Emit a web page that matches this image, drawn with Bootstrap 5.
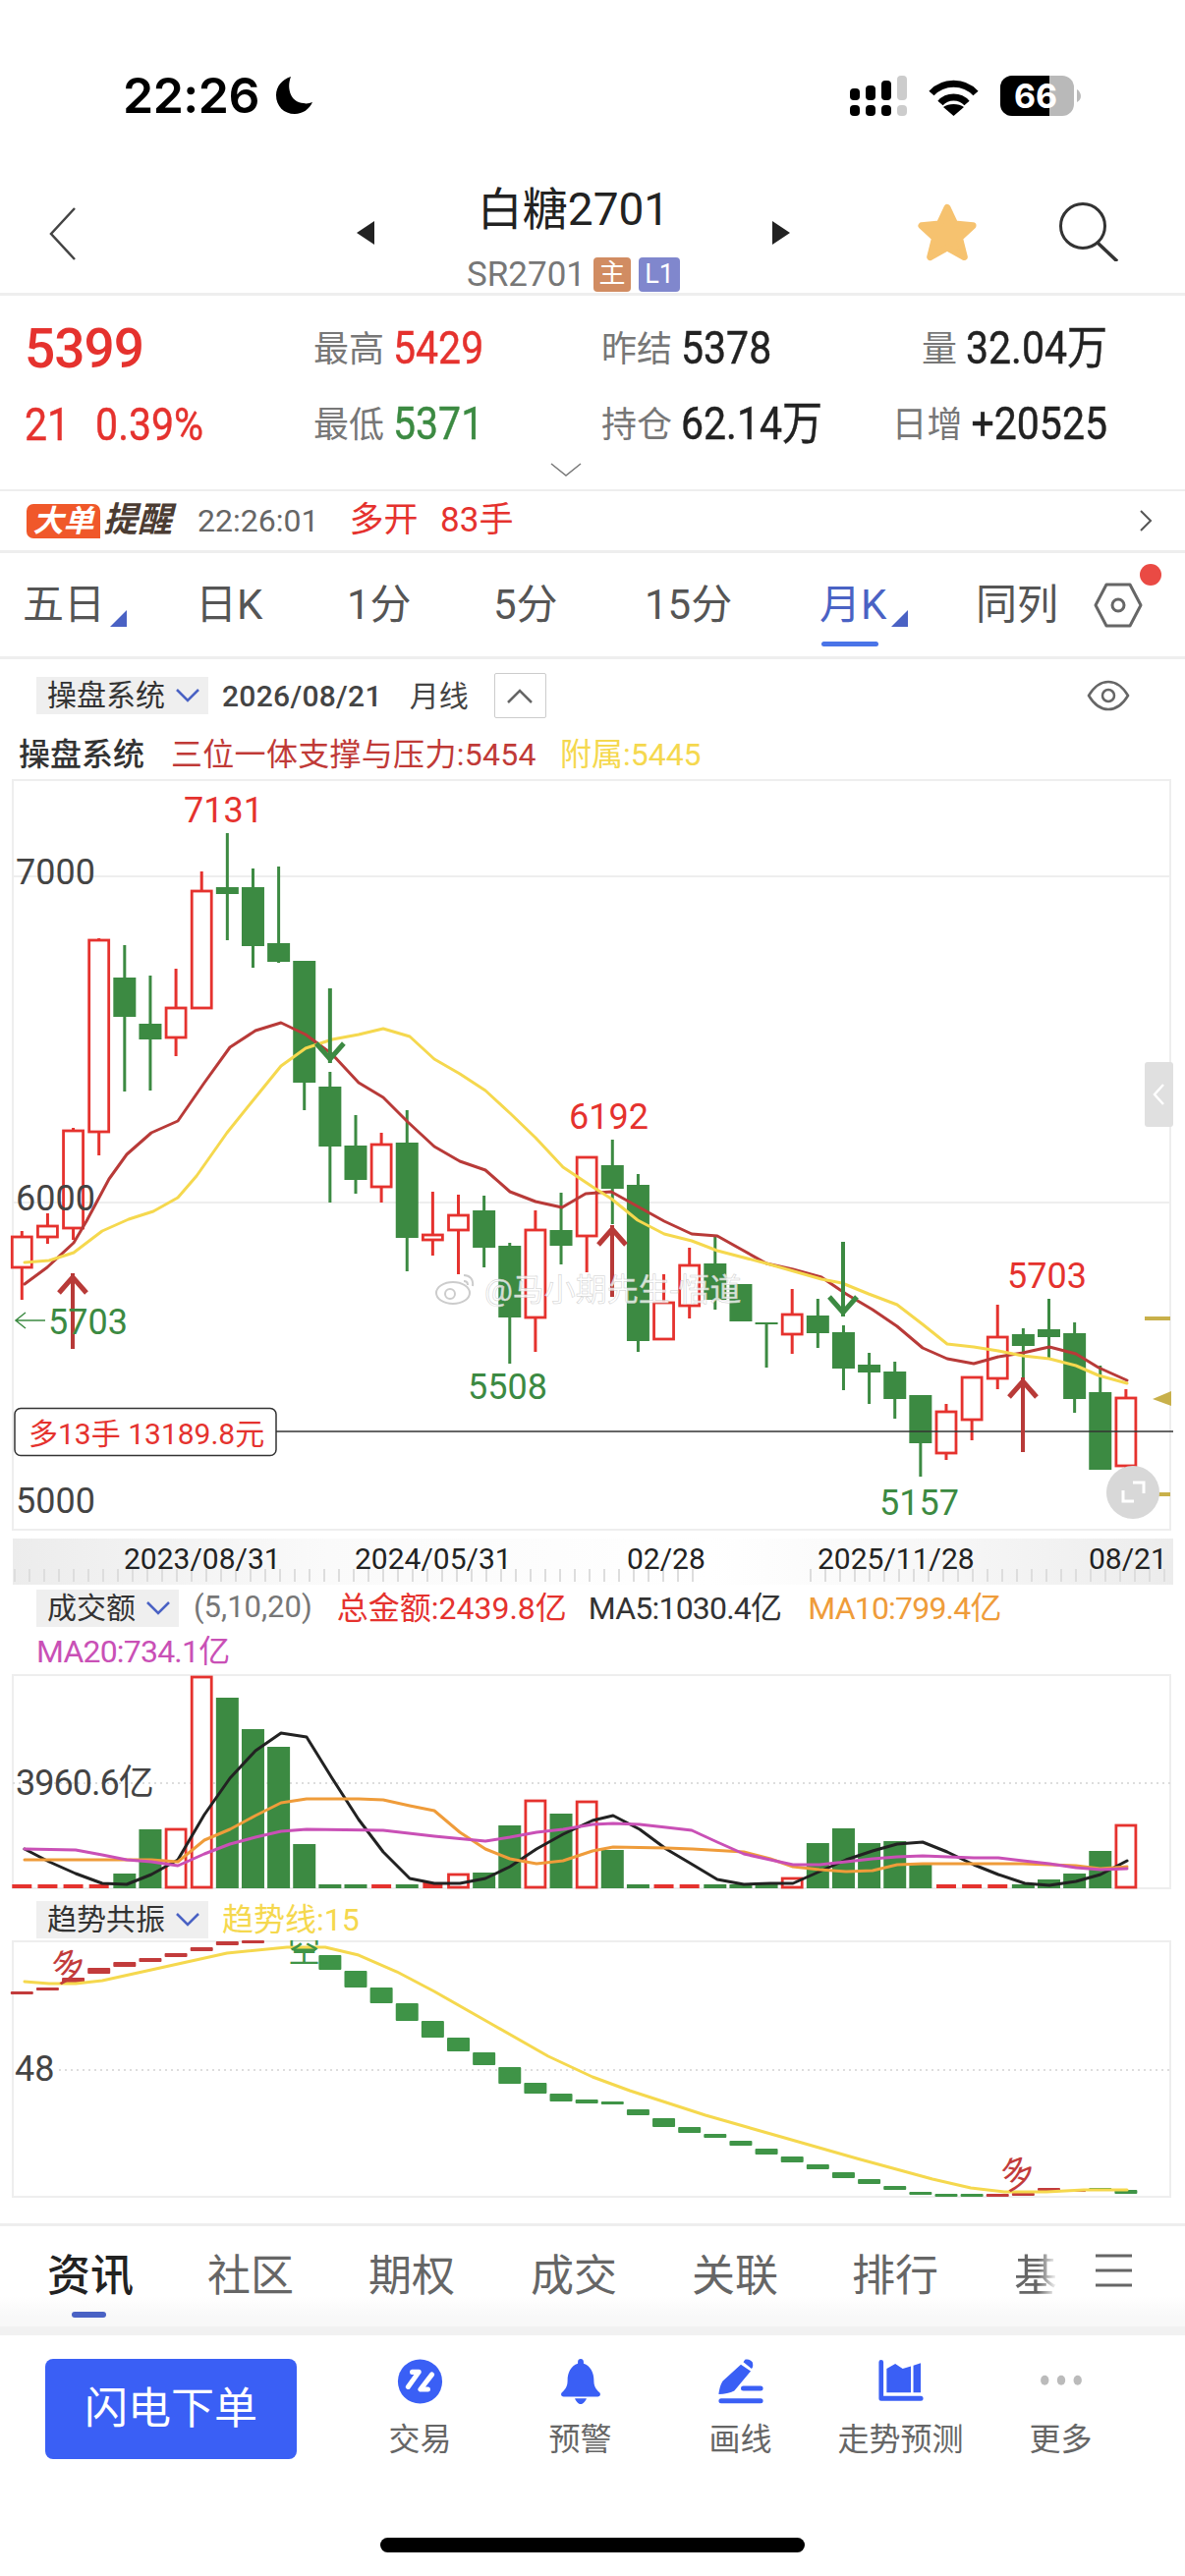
<!DOCTYPE html>
<html lang="zh-CN">
<head>
<meta charset="UTF-8">
<meta name="viewport" content="width=device-width, initial-scale=1.0">
<title>白糖2701</title>
<link href="https://cdn.jsdelivr.net/npm/bootstrap@5.3.2/dist/css/bootstrap.min.css" rel="stylesheet">
<script src="https://cdn.jsdelivr.net/npm/bootstrap@5.3.2/dist/js/bootstrap.bundle.min.js" defer></script>
<style>
  body { width: 1206px; height: 2622px; overflow: hidden; background: #fff; color: #222;
         font-family: Roboto, "Noto Sans CJK SC", sans-serif; }
  svg { display: block; }
  svg text { font-family: Roboto, "Noto Sans CJK SC", sans-serif; }
  .up { color: #e5322e; }
  .down { color: #3c8a42; }

  .status-row { height: 180px; padding: 70px 106px 0 125px; }
  .status-time { font: 600 50px/54px Inter, sans-serif; color: #000; letter-spacing: -.5px; }
  .status-icons { gap: 22px; padding-top: 7px; }

  .nav-row { height: 121px; padding-left: 50px; border-bottom: 3px solid #eee; }
  .nav-back { width: 313px; padding-top: 30px; }
  .nav-mid { width: 405px; }
  .tri-mark { margin-top: 45px; }
  .nav-title { font-size: 46px; line-height: 50px; margin-top: 8px; color: #222; }
  .nav-sub { font-size: 35px; line-height: 36px; color: #777; margin-top: 24px; height: 36px; }
  .tag-zhu, .tag-l1 { display: inline-block; color: #fff; font-size: 27px; line-height: 35px; height: 35px; border-radius: 4px; text-align: center; }
  .tag-zhu { width: 38px; background: #d18c62; margin-left: 8px; }
  .tag-l1 { width: 42px; background: #8087cd; margin-left: 8px; }
  .nav-star { margin: 26px 0 0 129px; }
  .nav-find { margin: 26px 0 0 83px; }

  .quote-box { height: 199px; padding: 30px 79px 0 25px; border-bottom: 2px solid #eee; }
  .quote-grid { display: grid; grid-template-columns: 294px 293px 280px 1fr; grid-auto-rows: 48px; row-gap: 29px; align-items: center; font-size: 41px; line-height: 48px; white-space: nowrap; }
  .quote-grid .lb { font-size: 36px; color: #777; margin-right: 9px; }
  .quote-last { font-size: 55px; font-weight: 500; letter-spacing: -1px; }
  .quote-val { display: inline-block; transform: scaleY(1.14); -webkit-text-stroke: .4px currentColor; }
  .quote-gap { margin-left: 26px; }

  .alert-row { height: 63px; padding: 0 33px 0 27px; border-bottom: 3px solid #eee; }
  .big-tag { width: 75px; height: 35px; background: #f0582a; color: #fff; font-size: 31px; line-height: 35px; font-weight: 700; font-style: italic; border-radius: 7px 7px 0 7px; text-align: center; }
  .tip-word { font-size: 35px; font-weight: 700; font-style: italic; color: #4b3c33; margin-left: 3px; }
  .alert-time { font-size: 32px; color: #666; margin-left: 26px; }
  .alert-msg { font-size: 35px; color: #e5322e; margin-left: 31px; word-spacing: 14px; }

  .period-row { height: 108px; display: grid; grid-template-columns: 176px 154px 149px 154px 178px 159px 120px 1fr; padding-left: 23px; align-items: center; border-bottom: 3px solid #eee; font-size: 42px; color: #555; }
  .period-item { position: relative; width: fit-content; line-height: 50px; }
  .period-on { color: #4a62c4; }
  .period-on::before { content: ""; position: absolute; left: 2px; right: 8px; bottom: -17px; height: 5px; border-radius: 3px; background: #4a74e8; }
  .has-corner::after { content: ""; position: absolute; right: -22px; bottom: 3px; border-style: solid; border-width: 0 0 17px 17px; border-color: transparent transparent #4a62c4 transparent; }
  .set-dot { position: absolute; left: 47px; top: -19px; width: 22px; height: 22px; border-radius: 50%; background: #ea4a44; }

  .tool-row { height: 74px; padding: 0 56px 0 37px; font-size: 30px; color: #444; }
  .pick-box { height: 38px; background: #efefef; padding: 0 9px 0 11px; gap: 11px; font-size: 30px; line-height: 38px; color: #333; }
  .date-txt { margin-left: 14px; font-weight: 500; letter-spacing: .3px; }
  .fold-btn { width: 53px; height: 46px; border: 1.5px solid #ccc; border-radius: 2px; margin-left: 26px; }

  .legend-row { height: 48px; padding-left: 19px; font-size: 32px; line-height: 46px; white-space: nowrap; }
  .legend-head { font-weight: 500; color: #333; margin-right: 27px; }
  .c-ma { color: #c03a37; letter-spacing: .3px; }
  .c-yellow { color: #f5d84e; margin-left: 24px; }

  .vol-head { height: 47px; padding-left: 37px; font-size: 30px; white-space: nowrap; }
  .vol-params { color: #777; margin-left: 15px; font-size: 31px; }
  .vol-total { margin-left: 25px; font-size: 32px; }
  .vol-ma5 { margin-left: 22px; font-size: 32px; color: #333; letter-spacing: -.8px; }
  .vol-ma10 { margin-left: 27px; font-size: 32px; color: #ef9c3a; letter-spacing: -.8px; }
  .vol-ma20 { height: 43px; padding-left: 37px; font-size: 32px; line-height: 42px; color: #c950b6; letter-spacing: -.8px; }
  .trend-head { height: 50px; padding: 8px 0 0 37px; }
  .trend-name { margin-left: 14px; font-size: 32px; color: #f5d84e; }

  .info-row { margin-top: 25px; border-top: 3px solid #eee; height: 114px; display: grid; grid-template-columns: 163px 164px 165px 164px 163px 165px 83px 1fr; padding-left: 48px;
              background: linear-gradient(#fff 70%, #f8f8f8 90%); border-bottom: 9px solid #f1f1f1; align-items: start; font-size: 44px; color: #666; }
  .info-item { position: relative; line-height: 60px; margin-top: 21px; width: fit-content; }
  .info-on { color: #222; font-weight: 500; }
  .info-on::after { content: ""; position: absolute; left: 25px; width: 35px; bottom: -12px; height: 6px; border-radius: 3px; background: #4a62c4; }
  .info-fade { -webkit-mask-image: linear-gradient(90deg, #000 55%, transparent 100%); mask-image: linear-gradient(90deg, #000 55%, transparent 100%); }

  .act-row { height: 245px; padding: 24px 0 0 46px; position: relative; }
  .fast-btn { width: 256px; height: 102px; background: #3a5ff5; border: 0; border-radius: 8px; color: #fff; font-size: 44px; }
  .act-item { width: 163px; height: 102px; font-size: 32px; line-height: 40px; color: #666; }
  .act-item svg { height: 55px; margin-bottom: 16px; }
  .home-bar { position: absolute; left: 387px; bottom: 24px; width: 432px; height: 15px; background: #000; border-radius: 8px; }
</style>
</head>
<body>

  <!-- status bar -->
  <div class="status-row d-flex justify-content-between">
    <div class="d-flex align-items-start">
      <span class="status-time">22:26</span>
      <svg class="ms-3" width="40" height="40" viewBox="0 0 40 40" style="margin-top:7px"><path d="M16 1C7 4 1 11 1 20c0 11 8 19 19 19 8 0 15-5 18-12-3 1-6 2-9 1C17 28 11 14 16 1z" fill="#000"/></svg>
    </div>
    <div class="status-icons d-flex align-items-start">
      <svg width="58" height="41" viewBox="0 0 58 41">
        <g fill="#000"><rect x="0" y="13" width="10" height="12" rx="4"/><rect x="16" y="10" width="10" height="15" rx="4"/><rect x="32" y="5" width="10" height="20" rx="4"/>
        <rect x="0" y="30" width="10" height="11" rx="4"/><rect x="16" y="30" width="10" height="11" rx="4"/><rect x="32" y="30" width="10" height="11" rx="4"/></g>
        <rect x="48" y="0" width="10" height="25" rx="4" fill="#ccc"/><rect x="48" y="30" width="10" height="11" rx="4" fill="#ccc"/>
      </svg>
      <svg class="mt-1" width="51" height="37" viewBox="0 0 51 37"><path d="M3 14C15 1 36 1 48 14M12 24C19 16 32 16 39 24" fill="none" stroke="#000" stroke-width="7"/><path d="M25.500 37L15 28c5-4 16-4 21 0z" fill="#000"/></svg>
      <svg width="82" height="41" viewBox="0 0 82 41">
        <rect width="75" height="41" rx="12" fill="#b9b9b9"/><path d="M12 0h38v41H12A12 12 0 0 1 0 29V12A12 12 0 0 1 12 0z" fill="#000"/>
        <path d="M78 14c2 1 4 4 4 7s-2 5-4 6z" fill="#bbb"/>
        <text x="36" y="33" text-anchor="middle" font-size="34" font-weight="700" fill="#fff" style="font-family:Inter,sans-serif">66</text>
      </svg>
    </div>
  </div>

  <!-- title -->
  <div class="nav-row d-flex">
    <div class="nav-back">
      <svg width="28" height="56" viewBox="0 0 28 56"><path d="M26 2L2 28l24 26" fill="none" stroke="#444" stroke-width="2.500"/></svg>
    </div>
    <svg class="tri-mark" width="18" height="24" viewBox="0 0 18 24"><path d="M18 0v24L0 12z" fill="#222"/></svg>
    <div class="nav-mid text-center">
      <div class="nav-title">白糖2701</div>
      <div class="nav-sub d-flex justify-content-center">SR2701<span class="tag-zhu">主</span><span class="tag-l1">L1</span></div>
    </div>
    <svg class="tri-mark" width="18" height="24" viewBox="0 0 18 24"><path d="M0 0v24l18-12z" fill="#222"/></svg>
    <svg class="nav-star" width="62" height="61" viewBox="0 0 64 62"><path d="M32 5l8 17 19 2-14 13 5 20-18-10-18 10 5-20L5 24l19-2z" fill="#f6c26f" stroke="#f6c26f" stroke-width="7" stroke-linejoin="round"/></svg>
    <svg class="nav-find" width="60" height="60" viewBox="0 0 60 60"><circle cx="24" cy="24" r="22.500" fill="none" stroke="#333" stroke-width="3"/><path d="M39 41l20 19" stroke="#333" stroke-width="3.500"/></svg>
  </div>

  <!-- quote -->
  <div class="quote-box">
    <div class="quote-grid">
      <div class="up quote-last">5399</div>
      <div><span class="lb">最高</span><span class="up quote-val">5429</span></div>
      <div><span class="lb">昨结</span><span class="quote-val">5378</span></div>
      <div class="text-end"><span class="lb">量</span><span class="quote-val">32.04万</span></div>
      <div class="up"><span class="quote-val">21</span><span class="quote-val quote-gap">0.39%</span></div>
      <div><span class="lb">最低</span><span class="down quote-val">5371</span></div>
      <div><span class="lb">持仓</span><span class="quote-val">62.14万</span></div>
      <div class="text-end"><span class="lb">日增</span><span class="quote-val">+20525</span></div>
    </div>
    <svg class="mx-auto" style="margin-top:15px" width="32" height="14" viewBox="0 0 32 14"><path d="M1 1l15 12L31 1" fill="none" stroke="#777" stroke-width="1.500"/></svg>
  </div>

  <div class="alert-row d-flex align-items-center">
    <div class="big-tag">大单</div>
    <div class="tip-word">提醒</div>
    <div class="alert-time">22:26:01</div>
    <div class="alert-msg">多开 83手</div>
    <svg class="ms-auto" width="13" height="22" viewBox="0 0 13 22"><path d="M1 1l10 10L1 21" fill="none" stroke="#555" stroke-width="2"/></svg>
  </div>

  <div class="period-row">
    <div class="period-item has-corner">五日</div>
    <div class="period-item">日K</div>
    <div class="period-item">1分</div>
    <div class="period-item">5分</div>
    <div class="period-item">15分</div>
    <div class="period-item period-on has-corner">月K</div>
    <div class="period-item">同列</div>
    <div class="period-item">
      <svg width="50" height="46" viewBox="0 0 50 46"><path d="M13 2h24l11 21-11 21H13L2 23z" fill="none" stroke="#666" stroke-width="3" stroke-linejoin="round"/><circle cx="25" cy="23" r="6" fill="none" stroke="#666" stroke-width="3"/></svg>
      <span class="set-dot"></span>
    </div>
  </div>

  <!-- main chart -->
  <div class="tool-row d-flex align-items-center">
    <div class="pick-box d-flex align-items-center">操盘系统
      <svg width="24" height="14" viewBox="0 0 24 14"><path d="M1 1l11 11L23 1" fill="none" stroke="#4a62c4" stroke-width="2.500"/></svg>
    </div>
    <span class="date-txt">2026/08/21</span>
    <span class="ms-4 ps-1">月线</span>
    <div class="fold-btn d-flex align-items-center justify-content-center">
      <svg width="26" height="15" viewBox="0 0 26 15"><path d="M1 14L13 2l12 12" fill="none" stroke="#666" stroke-width="2.500"/></svg>
    </div>
    <svg class="ms-auto" width="44" height="32" viewBox="0 0 44 32"><path d="M2 16C8 6 15 2 22 2s14 4 20 14c-6 10-13 14-20 14S8 26 2 16z" fill="none" stroke="#666" stroke-width="2.500"/><circle cx="22" cy="16" r="6" fill="none" stroke="#666" stroke-width="2.500"/></svg>
  </div>
  <div class="legend-row">
    <span class="legend-head">操盘系统</span><span class="c-ma">三位一体支撑与压力:5454</span><span class="c-yellow">附属:5445</span>
  </div>
  <svg id="mainChart" width="1206" height="768" viewBox="0 793 1206 768"></svg>
  <svg id="axisBand" width="1206" height="52" viewBox="0 1561 1206 52"></svg>

  <!-- volume -->
  <div class="vol-head d-flex align-items-center">
    <div class="pick-box d-flex align-items-center">成交额
      <svg width="24" height="14" viewBox="0 0 24 14"><path d="M1 1l11 11L23 1" fill="none" stroke="#4a62c4" stroke-width="2.500"/></svg>
    </div>
    <span class="vol-params">(5,10,20)</span>
    <span class="vol-total up">总金额:2439.8亿</span>
    <span class="vol-ma5">MA5:1030.4亿</span>
    <span class="vol-ma10">MA10:799.4亿</span>
  </div>
  <div class="vol-ma20">MA20:734.1亿</div>
  <svg id="volChart" width="1206" height="222" viewBox="0 1703 1206 222"></svg>

  <!-- trend -->
  <div class="trend-head d-flex align-items-center">
    <div class="pick-box d-flex align-items-center">趋势共振
      <svg width="24" height="14" viewBox="0 0 24 14"><path d="M1 1l11 11L23 1" fill="none" stroke="#4a62c4" stroke-width="2.500"/></svg>
    </div>
    <span class="trend-name">趋势线:15</span>
  </div>
  <svg id="trendChart" width="1206" height="263" viewBox="0 1975 1206 263"></svg>

  <!-- bottom -->
  <div class="info-row">
    <div class="info-item info-on">资讯</div>
    <div class="info-item">社区</div>
    <div class="info-item">期权</div>
    <div class="info-item">成交</div>
    <div class="info-item">关联</div>
    <div class="info-item">排行</div>
    <div class="info-item info-fade">基</div>
    <svg class="mt-4 pt-1" width="37" height="40" viewBox="0 0 37 36"><path d="M0 2h37M0 17h37M0 32h37" stroke="#666" stroke-width="3"/></svg>
  </div>
  <div class="act-row d-flex align-items-start">
    <button class="fast-btn" type="button">闪电下单</button>
    <div class="d-flex" style="margin-left:44px">
      <div class="act-item d-flex flex-column align-items-center">
        <svg width="55" height="55" viewBox="0 0 55 55"><circle cx="27.500" cy="27.500" r="27" fill="#3a5ff5"/><path d="M18 16H26L13 34M42 19L28 37H37" fill="none" stroke="#fff" stroke-width="6" stroke-linecap="round" stroke-linejoin="round"/></svg>交易
      </div>
      <div class="act-item d-flex flex-column align-items-center">
        <svg width="50" height="55" viewBox="0 0 50 55"><path d="M25 0c2 0 3.500 1.600 3.500 3.500v2.200C37 8.500 41 17 41 26c0 7 2 10.500 7 15 1.600 2 .8 5-2.200 5H4.200C1.200 46 .4 43 2 41c5-4.500 7-8 7-15 0-9 4-17.500 12.500-20.300V3.500C21.500 1.600 23 0 25 0z M18 48h14c0 2-4 7-7 7s-7-5-7-7z" fill="#3a5ff5"/></svg>预警
      </div>
      <div class="act-item d-flex flex-column align-items-center">
        <svg width="54" height="55" viewBox="0 0 54 55"><path d="M27 7l12 8-20 24c-5 3-12 4-19 4 1-7 2-11 5-16zM30 4l2-3c3-1 7 0 9 3 1 3 1 6-1 8z" fill="#3a5ff5"/><rect x="27" y="33" width="27" height="6" rx="3" fill="#3a5ff5"/><rect x="0" y="48" width="54" height="6" rx="3" fill="#3a5ff5"/></svg>画线
      </div>
      <div class="act-item d-flex flex-column align-items-center">
        <svg width="54" height="55" viewBox="0 0 54 55"><path d="M0 4a2.800 2.800 0 0 1 5.600 0v41H51a3 3 0 0 1 0 6H3a3 3 0 0 1-3-3z" fill="#3a5ff5"/><path d="M9.500 12L20 6l9 6 10-3v32H9.500zM42 8l9-3v36h-9z" fill="#3a5ff5"/></svg>走势预测
      </div>
      <div class="act-item d-flex flex-column align-items-center">
        <svg width="54" height="55" viewBox="0 0 54 55"><ellipse cx="7" cy="26" rx="5" ry="6" fill="#bbb"/><ellipse cx="27" cy="26" rx="5" ry="6" fill="#bbb"/><ellipse cx="47" cy="26" rx="5" ry="6" fill="#bbb"/></svg>更多
      </div>
    </div>
    <div class="home-bar"></div>
  </div>

  <script>
    const RED = '#e5322e', GREEN = '#3c8a42', MA_RED = '#b83a38', YEL = '#f5d84e';
    const cx = i => 22.3 + 26.13 * i;

    // [type, wick top, body top, body bottom, wick bottom]
    const candles = [
      ['r',1253,1259,1290,1323],['r',1235,1248,1259,1266],['r',1148,1151,1250,1262],['r',955,957,1152,1176],
      ['g',962,995,1035,1111],['g',993,1042,1058,1110],['r',986,1026,1056,1075],['r',887,907,1026,1026],
      ['g',848,903,910,957],['g',884,903,963,985],['g',882,960,979,980],['g',978,978,1102,1130],
      ['g',1091,1106,1167,1224],['g',1135,1166,1201,1215],['r',1153,1165,1208,1224],['g',1130,1163,1260,1294],
      ['r',1213,1257,1262,1278],['r',1216,1237,1252,1297],['g',1217,1232,1270,1290],['g',1265,1268,1341,1388],
      ['r',1232,1252,1341,1376],['g',1214,1252,1268,1287],['r',1177,1178,1258,1295],['g',1160,1186,1210,1246],
      ['g',1195,1206,1365,1376],['r',1297,1326,1363,1363],['r',1270,1288,1329,1342],['g',1258,1286,1323,1333],
      ['g',1307,1307,1345,1345],['g',1346,1346,1348,1392],['r',1312,1338,1358,1378],['g',1322,1339,1357,1372],
      ['g',1349,1356,1393,1415],['g',1377,1389,1397,1429],['g',1386,1396,1424,1444],['g',1420,1420,1469,1503],
      ['r',1429,1437,1479,1486],['r',1402,1402,1445,1466],['r',1328,1361,1403,1414],['g',1352,1358,1370,1402],
      ['g',1322,1353,1361,1383],['g',1346,1357,1424,1438],['g',1390,1417,1496,1496],['r',1414,1423,1492,1495]
    ];

    const maRed = [[25,1307],[48,1290],[75,1265],[88,1243],[111,1200],[129,1175],[154,1153],[181,1141],[208,1102],[234,1066],[260,1049],[286,1041],[311,1053],[338,1073],[365,1102],[390,1117],[415,1142],[442,1167],[468,1182],[494,1191],[519,1213],[545,1223],[572,1229],[596,1215],[622,1213],[649,1228],[676,1243],[704,1256],[730,1258],[755,1272],[780,1286],[807,1292],[836,1300],[861,1317],[888,1333],[913,1350],[939,1372],[964,1383],[991,1388],[1016,1381],[1041,1377],[1068,1371],[1095,1378],[1118,1392],[1147,1405]];
    const maYel = [[25,1285],[50,1283],[75,1275],[104,1253],[131,1241],[156,1233],[181,1219],[200,1197],[231,1153],[260,1117],[286,1085],[311,1067],[338,1058],[365,1053],[390,1047],[417,1055],[442,1078],[468,1093],[494,1110],[519,1133],[545,1158],[573,1188],[603,1208],[622,1220],[649,1242],[676,1256],[704,1263],[730,1273],[780,1286],[836,1302],[857,1306],[884,1317],[913,1328],[939,1348],[964,1368],[991,1371],[1016,1375],[1041,1380],[1068,1383],[1095,1390],[1118,1400],[1147,1408]];

    const poly = (pts, color, w) => `<polyline points="${pts.map(p => p.join(',')).join(' ')}" fill="none" stroke="${color}" stroke-width="${w}" stroke-linejoin="round" stroke-linecap="round"/>`;
    const txt = (x, y, s, fill, size, extra = '') => `<text x="${x}" y="${y}" fill="${fill}" font-size="${size}" ${extra}>${s}</text>`;

    function arrow(x, from, to, color) {
      // shaft plus open head, tip at "to"
      const dir = to < from ? 1 : -1, back = to + dir * 20;
      return `<path d="M${x} ${from}L${x} ${to}" stroke="${color}" stroke-width="4"/>` +
             `<path d="M${x - 14} ${back}L${x} ${to + dir * 4}L${x + 14} ${back}" fill="none" stroke="${color}" stroke-width="5"/>`;
    }

    function drawMain() {
      let s = `<rect x="13" y="794" width="1178" height="763" fill="none" stroke="#eee" stroke-width="2"/>`;
      s += `<path d="M13 892H1191M13 1224H1191" stroke="#eee" stroke-width="2"/>`;
      candles.forEach((c, i) => {
        const x = cx(i), [t, wt, bt, bb, wb] = c;
        if (t === 'g') {
          s += `<rect x="${x - 1.500}" y="${wt}" width="3" height="${wb - wt}" fill="${GREEN}"/>`;
          s += `<rect x="${x - 11.500}" y="${bt}" width="23" height="${bb - bt}" fill="${GREEN}"/>`;
        } else {
          s += `<rect x="${x - 1.500}" y="${wt}" width="3" height="${wb - wt}" fill="${RED}"/>`;
          s += `<rect x="${x - 10}" y="${bt}" width="20" height="${bb - bt}" fill="#fff" stroke="${RED}" stroke-width="2.800"/>`;
        }
      });
      s += `<path d="M281 1457H1194" stroke="#333" stroke-width="1.500"/>`;
      s += poly(maRed, MA_RED, 3) + poly(maYel, YEL, 3);
      s += arrow(74, 1373, 1296, MA_RED) + arrow(623, 1320, 1247, MA_RED) + arrow(1041, 1478, 1402, MA_RED);
      s += arrow(cx(12), 1006, 1082, GREEN) + arrow(858, 1264, 1340, GREEN);
      // price labels
      s += txt(187, 837, '7131', RED, 36) + txt(16, 900, '7000', '#444', 36) + txt(16, 1232, '6000', '#444', 36) + txt(16, 1540, '5000', '#444', 36);
      s += txt(579, 1149, '6192', RED, 36) + txt(476, 1424, '5508', GREEN, 36) + txt(895, 1542, '5157', GREEN, 36) + txt(1025, 1311, '5703', RED, 36);
      s += `<path d="M46 1344H16M26 1336l-10 8 10 8" fill="none" stroke="${GREEN}" stroke-width="1.500"/>` + txt(49, 1358, '5703', GREEN, 36);
      // position tag
      s += `<rect x="15" y="1433.500" width="266" height="48" rx="6" fill="#fff" stroke="#333" stroke-width="1.500"/>`;
      s += txt(29, 1470, '多13手 13189.8元', RED, 30);
      // gold markers
      s += `<path d="M1165 1342H1191M1165 1521H1191" stroke="#c8b04a" stroke-width="4"/><path d="M1173 1424l19-8v15z" fill="#c8b04a"/>`;
      // side handle and expand button
      s += `<rect x="1165" y="1081" width="29" height="66" rx="3" fill="#e0e0e0"/><path d="M1184 1104l-9 10 9 10" fill="none" stroke="#fff" stroke-width="2.500"/>`;
      s += `<circle cx="1153" cy="1519" r="27" fill="#d8d8d8"/><path d="M1143 1517v11h11M1153 1509h11v11" fill="none" stroke="#fff" stroke-width="3"/>`;
      // watermark
      s += `<g fill="none" stroke="#ccc" stroke-width="2"><ellipse cx="461" cy="1316" rx="17" ry="11"/><circle cx="458" cy="1317" r="5"/><path d="M472 1298c6 0 10 4 9 11M472 1304c3 0 4 2 4 4"/></g>`;
      s += txt(493, 1324, '@马小期先生-悟道', 'rgba(255,255,255,.8)', 32, 'stroke="#ccc" stroke-width=".5"');
      document.getElementById('mainChart').innerHTML = s;
    }

    function drawAxis() {
      let s = `<defs><linearGradient id="bandFade"><stop offset="0" stop-color="#ececec"/><stop offset=".27" stop-color="#fafafa"/><stop offset=".6" stop-color="#fff"/><stop offset=".8" stop-color="#f7f7f7"/><stop offset="1" stop-color="#ececec"/></linearGradient></defs>`;
      s += `<rect x="13" y="1566" width="1181" height="47" fill="url(#bandFade)"/>`;
      for (let x = 15; x < 1190; x += 15) {
        if (x > 718 && x < 824) continue;
        s += `<path d="M${x} 1597V1610" stroke="#ddd" stroke-width="2"/>`;
      }
      [[126,'2023/08/31'],[361,'2024/05/31'],[638,'02/28'],[832,'2025/11/28'],[1108,'08/21']].forEach(a => {
        s += txt(a[0], 1597, a[1], '#222', 30);
      });
      document.getElementById('axisBand').innerHTML = s;
    }

    function drawVolume() {
      const tops = [1918,1918,1918,1918,1907,1862,1862,1707,1728,1760,1778,1877,1918,1918,1918,1918,1916,1908,1906,1858,1833,1846,1834,1883,1918,1918,1918,1918,1918,1918,1912,1876,1861,1876,1874,1898,1918,1918,1918,1918,1913,1907,1884,1858];
      let s = `<rect x="13" y="1705" width="1178" height="217" fill="none" stroke="#eee" stroke-width="2"/>`;
      s += `<path d="M13 1815H1191" stroke="#ddd" stroke-width="2" stroke-dasharray="2 4"/>`;
      tops.forEach((y, i) => {
        const x = cx(i);
        if (candles[i][0] === 'g') s += `<rect x="${x - 11.500}" y="${y}" width="23" height="${1922 - y}" fill="${GREEN}"/>`;
        else if (y >= 1916) s += `<rect x="${x - 10}" y="${y}" width="20" height="${1922 - y}" fill="${RED}"/>`;
        else s += `<rect x="${x - 10}" y="${y}" width="20" height="${1921 - y}" fill="#fff" stroke="${RED}" stroke-width="2.800"/>`;
      });
      s += poly([[25,1882],[50,1895],[77,1907],[104,1917],[129,1918],[154,1908],[181,1893],[208,1847],[234,1810],[260,1782],[286,1764],[312,1768],[338,1810],[365,1852],[390,1885],[417,1912],[442,1917],[468,1917],[494,1912],[519,1900],[546,1882],[573,1867],[603,1853],[624,1848],[651,1862],[678,1882],[705,1898],[730,1913],[757,1918],[784,1917],[807,1917],[834,1905],[861,1893],[888,1884],[913,1877],[939,1875],[964,1885],[991,1898],[1016,1908],[1043,1917],[1068,1919],[1095,1915],[1120,1908],[1147,1894]], '#222', 3);
      s += poly([[25,1893],[154,1893],[181,1895],[208,1873],[234,1862],[260,1848],[286,1835],[312,1831],[365,1831],[390,1832],[417,1838],[442,1843],[468,1865],[494,1882],[519,1892],[546,1897],[573,1894],[603,1884],[624,1880],[678,1881],[705,1882],[757,1885],[784,1892],[807,1900],[834,1903],[861,1905],[888,1904],[913,1898],[939,1897],[1041,1897],[1095,1899],[1120,1902],[1147,1900]], '#ef9c3a', 3);
      s += poly([[25,1882],[77,1883],[104,1888],[129,1893],[154,1895],[181,1899],[208,1887],[234,1877],[260,1870],[286,1864],[312,1862],[390,1863],[442,1869],[494,1874],[519,1870],[546,1865],[573,1862],[603,1857],[624,1856],[651,1857],[678,1860],[704,1863],[730,1875],[757,1887],[784,1893],[807,1898],[834,1898],[861,1895],[888,1892],[913,1890],[939,1889],[991,1891],[1016,1891],[1041,1894],[1068,1897],[1095,1901],[1120,1903],[1147,1902]], '#c950b6', 3);
      s += txt(16, 1827, '3960.6亿', '#444', 36, 'letter-spacing="-1"');
      document.getElementById('volChart').innerHTML = s;
    }

    function drawTrend() {
      const blocks = [[2027,2030],[2023,2026],[2013,2018],[2003,2009],[1997,2002],[1993,1997],[1988,1992],[1982,1986],[1976,1980],[1975,1978],null,[1982,1986],[1990,2005],[2006,2023],[2023,2039],[2039,2057],[2057,2074],[2074,2088],[2089,2102],[2104,2121],[2120,2131],[2131,2139],[2137,2141],[2139,2142],[2147,2153],[2156,2165],[2165,2171],[2172,2176],[2179,2184],[2187,2193],[2195,2201],[2203,2208],[2211,2217],[2218,2223],[2225,2229],[2231,2234],[2233,2236],[2233,2236],[2233,2236],[2232,2235],[2227,2230],[2229,2231],[2227,2229],[2229,2233]];
      let s = `<rect x="13" y="1976" width="1178" height="260" fill="none" stroke="#eee" stroke-width="2"/>`;
      s += `<path d="M60 2107H1191" stroke="#ddd" stroke-width="2" stroke-dasharray="2 4"/>`;
      blocks.forEach((b, i) => {
        if (!b) return;
        const isRed = i <= 9 || (i >= 38 && i <= 41);
        s += `<rect x="${cx(i) - 11.500}" y="${b[0]}" width="23" height="${b[1] - b[0]}" rx="1" fill="${isRed ? '#c23b3b' : '#3f9447'}"/>`;
      });
      s += poly([[25,2017],[50,2019],[77,2019],[104,2016],[154,2005],[231,1988],[292,1982],[331,1982],[365,1990],[404,2007],[442,2027],[500,2060],[558,2093],[603,2114],[641,2128],[718,2153],[795,2175],[872,2197],[949,2218],[988,2227],[1022,2231],[1065,2231],[1103,2229],[1147,2229]], YEL, 3);
      s += txt(0, 0, '多', '#c23b3b', 35, 'transform="translate(58 2019) rotate(-22)"');
      s += txt(0, 0, '多', '#c23b3b', 35, 'transform="translate(1024 2230) rotate(-22)"');
      s += txt(293, 1997, '空', '#3f9447', 33);
      s += txt(15, 2118, '48', '#444', 36);
      document.getElementById('trendChart').innerHTML = s;
    }

    drawMain();
    drawAxis();
    drawVolume();
    drawTrend();
  </script>
</body>
</html>
